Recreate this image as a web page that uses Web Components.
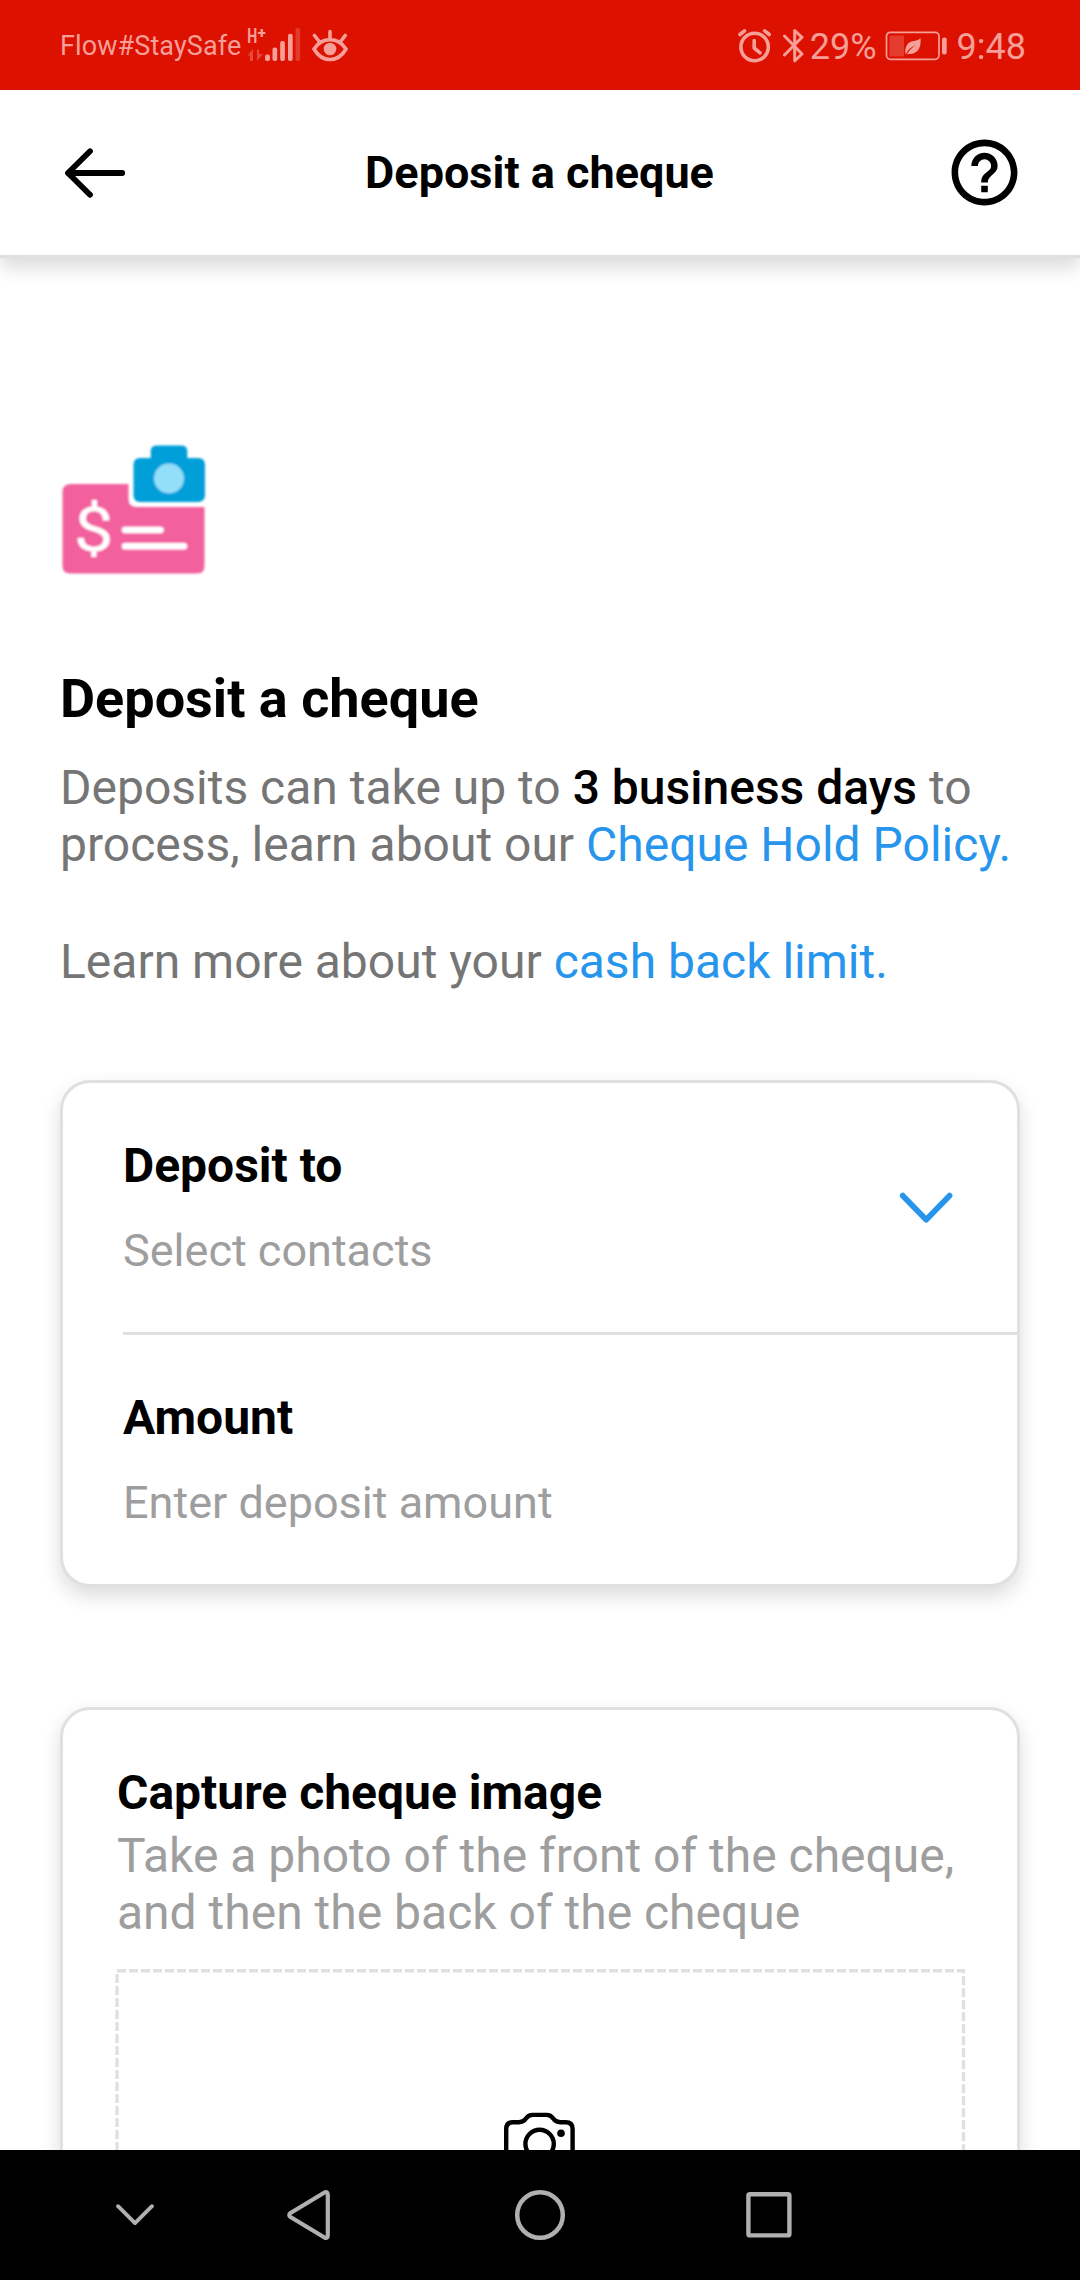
<!DOCTYPE html>
<html lang="en">
<head>
<meta charset="utf-8">
<title>Deposit a cheque</title>
<style>
html,body{margin:0;padding:0}
body{width:1080px;height:2280px;overflow:hidden;background:#fff;font-family:Roboto,"Liberation Sans",sans-serif;color:#000}
a{color:#2895ed;text-decoration:none}
</style>
</head>
<body>
<app-screen>
  <status-bar slot="top"></status-bar>
  <nav-header slot="top">Deposit a cheque</nav-header>
  <deposit-intro>
    <span slot="title">Deposit a cheque</span>
    <span slot="lead">Deposits can take up to <b style="color:#000;font-weight:500">3 business days</b> to<br>process, learn about our <a>Cheque Hold Policy.</a></span>
    <span slot="more">Learn more about your <a>cash back limit.</a></span>
  </deposit-intro>
  <form-card>
    <field-row chevron>Deposit to<span slot="hint">Select contacts</span></field-row>
    <field-row>Amount<span slot="hint">Enter deposit amount</span></field-row>
  </form-card>
  <form-card>
    <cheque-capture>Capture cheque image<span slot="hint">Take a photo of the front of the cheque,<br>and then the back of the cheque</span></cheque-capture>
  </form-card>
  <system-nav slot="bottom"></system-nav>
</app-screen>
<script>
function define(name, html) {
  const t = document.createElement('template');
  t.innerHTML = html;
  customElements.define(name, class extends HTMLElement {
    constructor() {
      super();
      this.attachShadow({ mode: 'open' }).append(t.content.cloneNode(true));
    }
  });
}

define('app-screen', `
<style>
:host{display:flex;flex-direction:column;width:1080px;height:2280px;overflow:hidden}
.top{flex:none;z-index:1}
main{flex:1;min-height:0;overflow:hidden;display:flex;flex-direction:column;padding:186px 60px 0}
.bottom{flex:none;z-index:1}
</style>
<div class="top"><slot name="top"></slot></div>
<main><slot></slot></main>
<div class="bottom"><slot name="bottom"></slot></div>`);

define('status-bar', `
<style>
:host{display:flex;align-items:center;justify-content:space-between;height:90px;box-sizing:border-box;background:#dd1100;color:#f59f98;padding:2px 54px 0 60px}
div{display:flex;align-items:center}
.carrier{font-size:27px;line-height:32px;letter-spacing:.1px}
.num{font-size:36px;line-height:42px;padding-top:2px}
svg{display:block;flex:none}
.sig{margin-left:6px}.eye{margin-left:11px}
.bt{margin-left:11px}.pct{margin-left:5px}.bat{margin:0 10px 0 8px}
</style>
<div>
  <span class="carrier">Flow#StaySafe</span>
  <svg class="sig" width="54" height="50" viewBox="247 21 54 50" fill="currentColor">
    <text x="247.2" y="43" font-family="Roboto" font-weight="700" font-size="20" textLength="10" lengthAdjust="spacingAndGlyphs">H</text>
    <text x="257.8" y="37.6" font-family="Roboto" font-weight="900" font-size="15" textLength="8" lengthAdjust="spacingAndGlyphs">+</text>
    <path d="M247.500 55.500L253 49V61H250V55.500ZM257 49.500H259V54H263L257 61Z" fill="#e5483c"/>
    <g><rect x="265" y="54.5" width="5" height="6.5" rx="2"/><rect x="272.5" y="47.5" width="4.7" height="13.5" rx="2"/><rect x="280.2" y="41" width="4.7" height="20" rx="2"/><rect x="288" y="33.7" width="4.7" height="27.3" rx="2"/></g>
    <rect x="295.5" y="28" width="4.7" height="33" rx="2" fill="#e5392d"/>
  </svg>
  <svg class="eye" width="36" height="34" viewBox="312 29 36 34" fill="none" stroke="currentColor" stroke-width="3.6" stroke-linecap="round">
    <path d="M314 49C322 36.500 338 36.500 346 49C338 63 322 63 314 49ZM330 31.500V38M314.500 35.500L318.800 41M345.200 35.500L341 41"/><circle cx="330" cy="49" r="6.3" fill="currentColor" stroke="none"/>
  </svg>
</div>
<div>
  <svg width="34" height="36" viewBox="738 28 34 36" fill="none" stroke="currentColor" stroke-width="3.6" stroke-linecap="round" stroke-linejoin="round">
    <circle cx="754.600" cy="47" r="13.700"/><path d="M754.200 40.500V48L760 52.800M740 34.500L744.500 30.800M769.200 34.500L764.700 30.800"/>
  </svg>
  <svg class="bt" width="22" height="36" viewBox="783 28 22 36" fill="none" stroke="currentColor" stroke-width="3" stroke-linecap="round" stroke-linejoin="round"><path d="M784.500 36L802 54L794.700 60.800V30.500L802 37.300L784.500 55"/></svg>
  <span class="num pct">29%</span>
  <svg class="bat" width="62" height="30" viewBox="885 30.5 62 30">
    <rect x="886.500" y="31.800" width="52.500" height="27" rx="4" fill="none" stroke="currentColor" stroke-width="1.700"/>
    <rect x="889.500" y="35" width="14.500" height="21" fill="#e43b2e"/>
    <path d="M905.500 54C904 45 909 41 914 40.500C917 40 919 39 920.500 37.500C921.500 47 918 54 908.500 53.500L906.500 54C909 50 912 47 916 44.500C911 46.500 907.500 49.500 905.500 54Z" fill="currentColor"/>
    <rect x="942" y="37" width="4.700" height="17" rx="2" fill="currentColor"/>
  </svg>
  <span class="num">9:48</span>
</div>`);

define('nav-header', `
<style>
:host{display:flex;align-items:center;justify-content:space-between;height:168px;box-sizing:border-box;background:#fff;border-bottom:3px solid #e0e0e0;box-shadow:0 9px 18px rgba(0,0,0,.15);padding:0 56px 0 60px;position:relative;clip-path:inset(0 0 -40px 0)}
h1{margin:0;font-size:45px;font-weight:700;line-height:53px}
svg{display:block}
.back{width:84px}
.help{width:89px;display:flex;justify-content:flex-end}
</style>
<div class="back"><svg width="70" height="60" viewBox="60 143 70 60" fill="none" stroke="#000" stroke-width="5.800" stroke-linecap="round" stroke-linejoin="round"><path d="M122.200 173H68L90 151.300M68 173L90 194.800"/></svg></div>
<h1><slot></slot></h1>
<div class="help"><svg width="79" height="79" viewBox="0 0 24 24"><path d="M11 18h2v-2h-2v2zm1-16C6.480 2 2 6.480 2 12s4.480 10 10 10 10-4.480 10-10S17.520 2 12 2zm0 18c-4.410 0-8-3.590-8-8s3.590-8 8-8 8 3.590 8 8-3.590 8-8 8zm0-14c-2.210 0-4 1.790-4 4h2c0-1.100.9-2 2-2s2 .9 2 2c0 2-3 1.750-3 5h2c0-2.250 3-2.500 3-5 0-2.210-1.790-4-4-4z"/></svg></div>`);

define('cheque-icon', `
<style>:host{display:block;width:148px;height:131px}svg{display:block;overflow:visible}</style>
<svg width="148" height="131" viewBox="60 444 148 131">
  <defs><filter id="soft" x="-5%" y="-5%" width="110%" height="110%"><feGaussianBlur stdDeviation="1"/></filter></defs>
  <g filter="url(#soft)">
    <path d="M71 484H128.500V499Q128.500 507 137 507H204.500V566Q204.500 573.500 197 573.500H70.500Q62.500 573.500 62.500 566V492Q62.500 484 71 484Z" fill="#f2609e"/>
    <path d="M140 458H150.700V451Q150.700 445.500 157 445.500H181Q187.300 445.500 187.300 451V458H198Q205 458 205 465V495Q205 502 198 502H140Q133.500 502 133.500 495V465Q133.500 458 140 458Z" fill="#049fda"/>
    <circle cx="169" cy="478.500" r="15" fill="#93dff9"/>
    <text transform="translate(93.700 550.500) scale(1.16 1)" text-anchor="middle" font-family="Roboto" font-size="61" fill="#fff">$</text>
    <path d="M125 530H160.500M125 546.300H184" stroke="#fff" stroke-width="6.500" stroke-linecap="round"/>
  </g>
</svg>`);

define('deposit-intro', `
<style>
:host{display:flex;flex-direction:column;flex:none}
h2{margin:92px 0 0;font-size:54px;font-weight:700;line-height:63px}
p{margin:29px 0 0;font-size:48px;line-height:57px;color:#757575;white-space:nowrap}
p+p{margin-top:60px}
</style>
<cheque-icon></cheque-icon>
<h2><slot name="title"></slot></h2>
<p><slot name="lead"></slot></p>
<p><slot name="more"></slot></p>`);

define('form-card', `
<style>
:host{display:flex;flex-direction:column;flex:none;margin-top:90px;border:3px solid #e0e0e0;border-radius:30px;background:#fff;box-shadow:0 9px 20px rgba(0,0,0,.14)}
:host(:nth-of-type(n+2)){margin-top:120px}
</style><slot></slot>`);

define('field-row', `
<style>
:host{display:flex;align-items:center;justify-content:space-between;margin-left:60px;padding:54px 62px 55px 0}
:host(:not(:first-child)){border-top:3px solid #e0e0e0}
.text{display:flex;flex-direction:column;gap:30px}
.label{font-size:48px;line-height:57px;font-weight:700}
.hint{font-size:45px;line-height:53px;color:#9e9e9e}
svg{display:none}
:host([chevron]) svg{display:block}
</style>
<div class="text"><div class="label"><slot></slot></div><div class="hint"><slot name="hint"></slot></div></div>
<svg width="58" height="36" viewBox="897 1188.800 58 36" fill="none" stroke="#2895ed" stroke-width="5.800" stroke-linecap="round" stroke-linejoin="round"><path d="M902.800 1195.500L926.200 1219.500L949.500 1195.500"/></svg>`);

define('cheque-capture', `
<style>
:host{display:flex;flex-direction:column;padding:54px 51px 60px 54px}
.label{font-size:48px;line-height:57px;font-weight:700}
.hint{margin-top:6px;font-size:48px;line-height:57px;color:#9e9e9e;white-space:nowrap}
svg{display:block;margin:27px 0 0 -3px}
</style>
<div class="label"><slot></slot></div>
<div class="hint"><slot name="hint"></slot></div>
<svg width="854" height="340" viewBox="114 1968 854 340" fill="none">
  <path d="M117 1970.700H963.500V2306" stroke="#e0e0e0" stroke-width="3.400" stroke-dasharray="9 3"/>
  <path d="M117 1974V2306" stroke="#e0e0e0" stroke-width="3.400" stroke-dasharray="9 3"/>
  <g stroke="#000" stroke-width="4.400">
    <path d="M506.200 2166V2129Q506.200 2122.200 513 2122.200H519C527.500 2122.200 524.500 2114.900 532.500 2114.900H546.700C554.700 2114.900 551.700 2122.200 560.200 2122.200H565.800Q572.600 2122.200 572.600 2129V2166Z"/>
    <circle cx="539.600" cy="2144" r="14.200"/>
  </g>
  <circle cx="561" cy="2133.200" r="3.800" fill="#000"/>
</svg>`);

define('system-nav', `
<style>
:host{display:flex;align-items:center;height:130px;background:#000;padding-left:114px}
svg{display:block}
svg+svg{margin-left:var(--g)}
</style>
<svg width="42" height="28" viewBox="114 2200.500 42 28" fill="none" stroke="#b0b0b0" stroke-width="3.900" stroke-linecap="round" stroke-linejoin="round"><path d="M118 2205.700L135 2222.600L152 2205.700"/></svg>
<svg style="--g:129px" width="48" height="54" viewBox="285 2188 48 54" fill="none" stroke="#b0b0b0" stroke-width="4.200" stroke-linejoin="round"><path d="M290.500 2213Q288 2215 290.500 2217L324.500 2237.500Q327.800 2239 327.800 2235V2195Q327.800 2191 324.500 2192.500Z"/></svg>
<svg style="--g:180px" width="54" height="54" viewBox="513 2188 54 54" fill="none" stroke="#b0b0b0" stroke-width="4.500"><circle cx="540" cy="2215" r="22.800"/></svg>
<svg style="--g:177px" width="50" height="50" viewBox="744 2190 50 50" fill="none" stroke="#b0b0b0" stroke-width="4.400"><rect x="748.400" y="2194.200" width="41" height="41.200" rx="1.500"/></svg>`);
</script>
</body>
</html>
